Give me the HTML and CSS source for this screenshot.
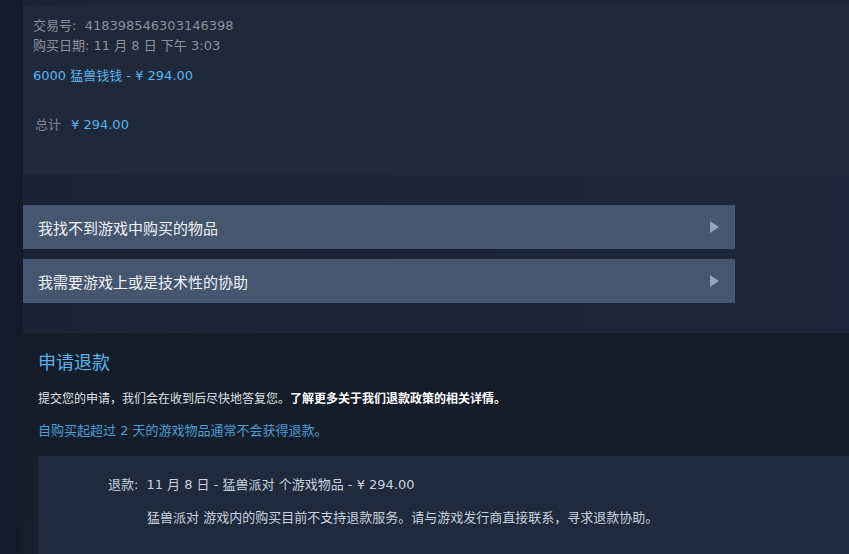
FILE: index.html
```html
<!DOCTYPE html>
<html lang="zh-CN">
<head>
    <meta charset="UTF-8">
    <title>申请退款</title>
    <link rel="stylesheet" href="styles.css">
</head>
<body>
    <div class="page">
        <!-- 交易信息 -->
        <div class="receipt">
            <div class="meta">交易号:&nbsp; 418398546303146398</div>
            <div class="meta">购买日期: 11 月 8 日 下午 3:03</div>
            <div class="item">6000 猛兽钱钱 - ¥ 294.00</div>
            <div class="total"><span class="total-label">总计</span><span class="total-value">¥ 294.00</span></div>
        </div>

        <!-- 帮助选项 -->
        <a href="#" class="help-btn">我找不到游戏中购买的物品<span class="arrow"></span></a>
        <a href="#" class="help-btn">我需要游戏上或是技术性的协助<span class="arrow"></span></a>

        <!-- 退款 -->
        <div class="refund">
            <h2 class="refund-title">申请退款</h2>
            <p class="refund-note">提交您的申请，我们会在收到后尽快地答复您。<a href="#">了解更多关于我们退款政策的相关详情。</a></p>
            <p class="refund-warn">自购买起超过 2 天的游戏物品通常不会获得退款。</p>
            <div class="refund-box">
                <div class="refund-line"><span class="refund-label">退款:</span>11 月 8 日 - 猛兽派对 个游戏物品 - ¥ 294.00</div>
                <div class="refund-msg">猛兽派对 游戏内的购买目前不支持退款服务。请与游戏发行商直接联系，寻求退款协助。</div>
            </div>
        </div>
    </div>
</body>
</html>
```

FILE: styles.css
```css
* {
    margin: 0;
    padding: 0;
    box-sizing: border-box;
}

body {
    background: linear-gradient(90deg, #121b29 0, #131c2a 23px, #1a2435 23px, #1c2739 100%);
    font-family: "DejaVu Sans", "Noto Sans CJK SC", sans-serif;
    height: 554px;
    overflow: hidden;
}

.page {
    padding: 5px 0 0 23px;
}

/* 交易信息 */
.receipt {
    background: #1f2939;
    height: 170px;
    padding: 11px 10px;
    font-size: 13px;
    line-height: 20px;
}

.meta {
    color: #8a929c;
}

.item {
    color: #58b3ee;
    margin-top: 10px;
}

.total {
    margin-top: 29px;
    color: #58b3ee;
}

.total-label {
    color: #7c8590;
    margin: 0 10px 0 2px;
}

/* 帮助选项 */
.help-btn {
    display: flex;
    align-items: center;
    justify-content: space-between;
    width: 712px;
    height: 44px;
    margin-top: 30px;
    padding: 0 16px 0 15px;
    background: #465670;
    color: #eef2f6;
    font-size: 15px;
    text-decoration: none;
}

.help-btn + .help-btn {
    margin-top: 10px;
}

.arrow {
    width: 0;
    height: 0;
    border-top: 6px solid transparent;
    border-bottom: 6px solid transparent;
    border-left: 9px solid #93a5bf;
}

/* 退款 */
.refund {
    margin-top: 30px;
    background: linear-gradient(180deg, #141c28 0, #161f2d 100%);
    padding: 16px 0 0 15px;
    height: 222px;
}

.refund-title {
    color: #58b3ee;
    font-size: 18px;
    font-weight: normal;
    line-height: 28px;
}

.refund-note {
    color: #dfe3e7;
    font-size: 12px;
    line-height: 20px;
    margin-top: 12px;
}

.refund-note a {
    color: #ffffff;
    font-weight: bold;
    text-decoration: none;
}

.refund-warn {
    color: #4a9fd6;
    font-size: 13px;
    line-height: 20px;
    margin-top: 12px;
}

.refund-box {
    margin-top: 15px;
    background: #1f2a3c;
    height: 120px;
    padding: 19px 0 0 70px;
    font-size: 13px;
    line-height: 20px;
    color: #c6d2dd;
}

.refund-label {
    margin-right: 8px;
}

.refund-msg {
    margin-top: 13px;
    padding-left: 39px;
}
```
